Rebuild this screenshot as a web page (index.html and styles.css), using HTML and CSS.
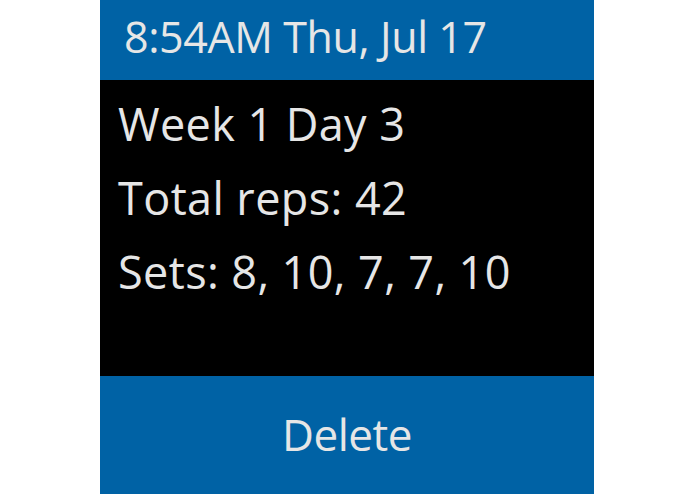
FILE: index.html
```html
<!DOCTYPE html>
<html>
<head>
<meta charset="utf-8">
<link rel="stylesheet" href="styles.css">
</head>
<body>
<div class="screen">
  <div class="header">8:54AM Thu, Jul 17</div>
  <div class="content">
    <div class="line">Week 1 Day 3</div>
    <div class="line">Total reps: 42</div>
    <div class="line">Sets: 8, 10, 7, 7, 10</div>
  </div>
  <div class="footer">Delete</div>
</div>
</body>
</html>
```
FILE: styles.css
```css
html, body {
  margin: 0;
  padding: 0;
  background: #ffffff;
}
.screen {
  width: 494px;
  height: 494px;
  margin-left: 100px;
  display: flex;
  flex-direction: column;
  font-family: "Open Sans", "Noto Sans", sans-serif;
  color: #e6e6e6;
}
.header {
  height: 80px;
  background: #0062a5;
  box-sizing: border-box;
  padding: 0 0 6px 24px;
  font-size: 43px;
  font-weight: 500;
  letter-spacing: -0.4px;
  line-height: 74px;
  white-space: nowrap;
}
.content {
  flex: 1;
  background: #000000;
  padding: 7px 0 0 18px;
}
.line {
  font-size: 45px;
  letter-spacing: 0.4px;
  line-height: 74px;
  white-space: nowrap;
}
.footer {
  height: 118px;
  box-sizing: border-box;
  padding-bottom: 2px;
  background: #0062a5;
  font-size: 44px;
  letter-spacing: -0.5px;
  display: flex;
  align-items: center;
  justify-content: center;
}
```
